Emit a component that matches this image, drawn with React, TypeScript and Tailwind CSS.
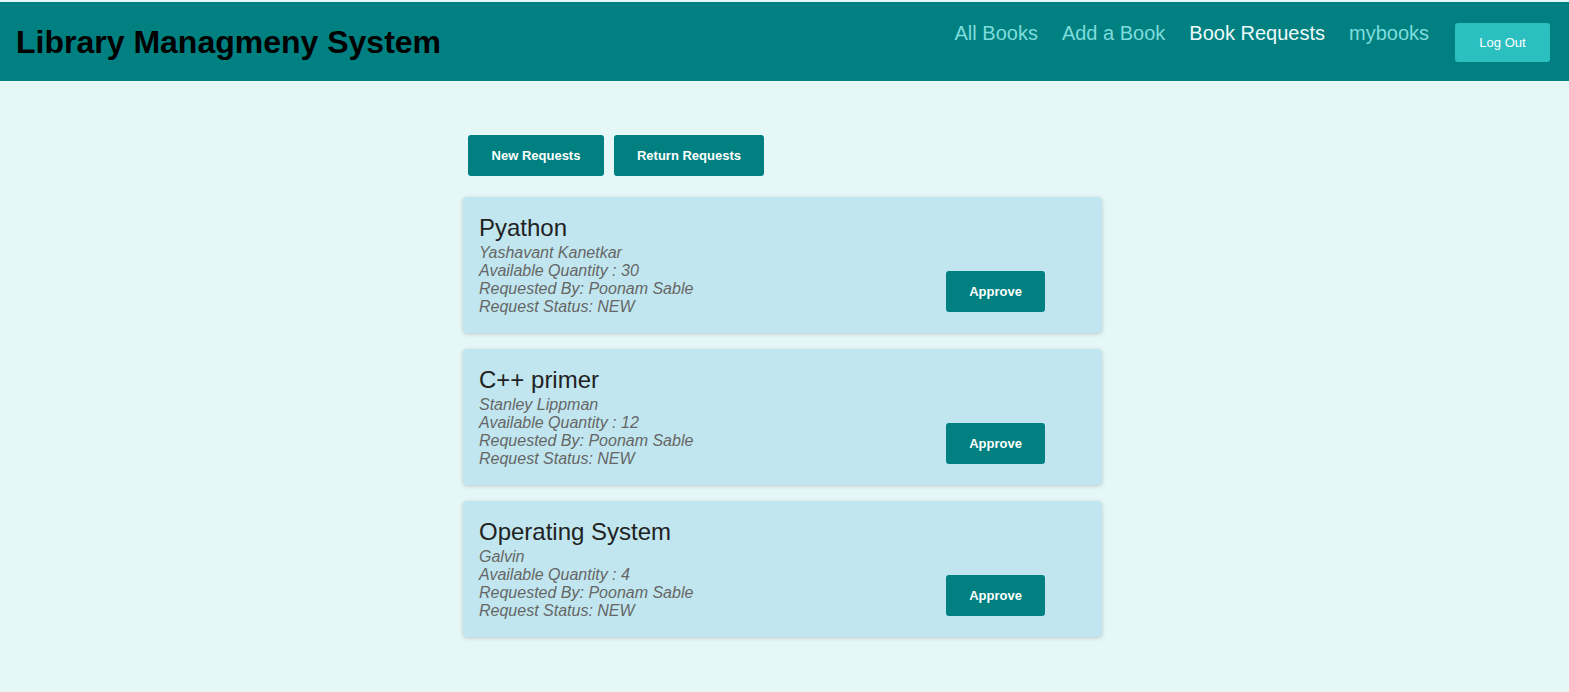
import React from "react";

const requests = [
  { title: "Pyathon", author: "Yashavant Kanetkar", qty: 30, by: "Poonam Sable", status: "NEW" },
  { title: "C++ primer", author: "Stanley Lippman", qty: 12, by: "Poonam Sable", status: "NEW" },
  { title: "Operating System", author: "Galvin", qty: 4, by: "Poonam Sable", status: "NEW" },
];

export default function App() {
  return (
    <div
      className="min-h-screen bg-[#e5f7f7] pt-[2px]"
      style={{ fontFamily: '"Liberation Sans", Arial, sans-serif' }}
    >
      {/* HEADER */}
      <header className="h-[79px] bg-[#008080] flex items-start justify-between pl-4 pr-[19px]">
        <h1 className="mt-[21px] text-[32px] font-bold text-black leading-[38px]">
          Library Managmeny System
        </h1>
        <nav className="flex items-start">
          <div className="flex gap-6 mt-[18px] text-[20px] leading-[26px]">
            <a className="text-[#7fdcdc]">All Books</a>
            <a className="text-[#7fdcdc]">Add a Book</a>
            <a className="text-[#eefafa]">Book Requests</a>
            <a className="text-[#7fdcdc]">mybooks</a>
          </div>
          <button className="ml-[26px] mt-[21px] w-[95px] h-[39px] rounded-[3px] bg-[#2bbfbf] text-white text-[13px]">
            Log Out
          </button>
        </nav>
      </header>

      {/* content */}
      <div className="w-[639px] pt-[54px] ml-[463px]">
        <div className="flex gap-[10px] pl-[5px]">
          <button className="w-[136px] h-[41px] rounded-[3px] bg-[#008080] text-white text-[13px] font-bold">
            New Requests
          </button>
          <button className="w-[150px] h-[41px] rounded-[3px] bg-[#008080] text-white text-[13px] font-bold">
            Return Requests
          </button>
        </div>

        <div className="flex flex-col gap-4 mt-[21px]">
          {requests.map((r, i) => (
            <div
              key={i}
              className="h-[136px] bg-[#c1e6ef] rounded-[4px] shadow-[0_1px_4px_rgba(0,0,0,0.18)] flex justify-between pl-4 pr-[57px] pt-[16px]"
            >
              <div>
                <h3 className="text-[24px] leading-[30px] text-[#222]">{r.title}</h3>
                <div className="italic text-[16px] leading-[18px] text-[#666] mt-[1px]">
                  <p>{r.author}</p>
                  <p>Available Quantity : {r.qty}</p>
                  <p>Requested By: {r.by}</p>
                  <p>Request Status: {r.status}</p>
                </div>
              </div>
              <button className="self-start mt-[58px] w-[99px] h-[41px] rounded-[3px] bg-[#008080] text-white text-[13px] font-bold">
                Approve
              </button>
            </div>
          ))}
        </div>
      </div>
    </div>
  );
}
